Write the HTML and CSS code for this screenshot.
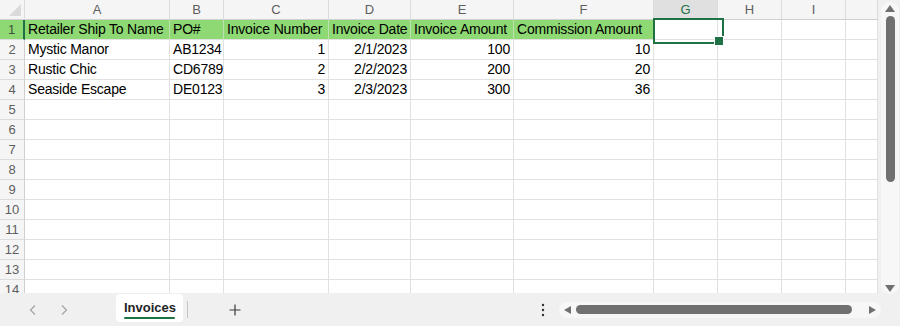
FILE: index.html
```html
<!DOCTYPE html>
<html lang="en">
<head>
    <meta charset="UTF-8">
    <meta name="viewport" content="width=device-width, initial-scale=1.0">
    <title>Invoices - Workbook</title>
    <link rel="stylesheet" href="styles.css">
</head>
<body>
    <div class="workbook">
        <div class="sheet">
            <div class="grid">
                <!-- column headers -->
                <div class="ch corner"></div>
                <div class="ch">A</div>
                <div class="ch">B</div>
                <div class="ch">C</div>
                <div class="ch">D</div>
                <div class="ch">E</div>
                <div class="ch">F</div>
                <div class="ch on">G</div>
                <div class="ch">H</div>
                <div class="ch">I</div>
                <div class="ch"></div>

                <!-- row 1: headings -->
                <div class="rh on">1</div>
                <div class="cell fill">Retailer Ship To Name</div>
                <div class="cell fill">PO#</div>
                <div class="cell fill">Invoice Number</div>
                <div class="cell fill">Invoice Date</div>
                <div class="cell fill">Invoice Amount</div>
                <div class="cell fill">Commission Amount</div>
                <div class="cell sel"></div>
                <div class="cell"></div>
                <div class="cell"></div>
                <div class="cell"></div>

                <div class="rh">2</div>
                <div class="cell">Mystic Manor</div>
                <div class="cell">AB1234</div>
                <div class="cell num">1</div>
                <div class="cell num">2/1/2023</div>
                <div class="cell num">100</div>
                <div class="cell num">10</div>
                <div class="cell"></div><div class="cell"></div><div class="cell"></div><div class="cell"></div>

                <div class="rh">3</div>
                <div class="cell">Rustic Chic</div>
                <div class="cell">CD6789</div>
                <div class="cell num">2</div>
                <div class="cell num">2/2/2023</div>
                <div class="cell num">200</div>
                <div class="cell num">20</div>
                <div class="cell"></div><div class="cell"></div><div class="cell"></div><div class="cell"></div>

                <div class="rh">4</div>
                <div class="cell">Seaside Escape</div>
                <div class="cell">DE0123</div>
                <div class="cell num">3</div>
                <div class="cell num">2/3/2023</div>
                <div class="cell num">300</div>
                <div class="cell num">36</div>
                <div class="cell"></div><div class="cell"></div><div class="cell"></div><div class="cell"></div>

                <!-- empty rows -->
                <div class="rh">5</div>
                <div class="cell"></div><div class="cell"></div><div class="cell"></div><div class="cell"></div><div class="cell"></div>
                <div class="cell"></div><div class="cell"></div><div class="cell"></div><div class="cell"></div><div class="cell"></div>
                <div class="rh">6</div>
                <div class="cell"></div><div class="cell"></div><div class="cell"></div><div class="cell"></div><div class="cell"></div>
                <div class="cell"></div><div class="cell"></div><div class="cell"></div><div class="cell"></div><div class="cell"></div>
                <div class="rh">7</div>
                <div class="cell"></div><div class="cell"></div><div class="cell"></div><div class="cell"></div><div class="cell"></div>
                <div class="cell"></div><div class="cell"></div><div class="cell"></div><div class="cell"></div><div class="cell"></div>
                <div class="rh">8</div>
                <div class="cell"></div><div class="cell"></div><div class="cell"></div><div class="cell"></div><div class="cell"></div>
                <div class="cell"></div><div class="cell"></div><div class="cell"></div><div class="cell"></div><div class="cell"></div>
                <div class="rh">9</div>
                <div class="cell"></div><div class="cell"></div><div class="cell"></div><div class="cell"></div><div class="cell"></div>
                <div class="cell"></div><div class="cell"></div><div class="cell"></div><div class="cell"></div><div class="cell"></div>
                <div class="rh">10</div>
                <div class="cell"></div><div class="cell"></div><div class="cell"></div><div class="cell"></div><div class="cell"></div>
                <div class="cell"></div><div class="cell"></div><div class="cell"></div><div class="cell"></div><div class="cell"></div>
                <div class="rh">11</div>
                <div class="cell"></div><div class="cell"></div><div class="cell"></div><div class="cell"></div><div class="cell"></div>
                <div class="cell"></div><div class="cell"></div><div class="cell"></div><div class="cell"></div><div class="cell"></div>
                <div class="rh">12</div>
                <div class="cell"></div><div class="cell"></div><div class="cell"></div><div class="cell"></div><div class="cell"></div>
                <div class="cell"></div><div class="cell"></div><div class="cell"></div><div class="cell"></div><div class="cell"></div>
                <div class="rh">13</div>
                <div class="cell"></div><div class="cell"></div><div class="cell"></div><div class="cell"></div><div class="cell"></div>
                <div class="cell"></div><div class="cell"></div><div class="cell"></div><div class="cell"></div><div class="cell"></div>
                <div class="rh">14</div>
                <div class="cell"></div><div class="cell"></div><div class="cell"></div><div class="cell"></div><div class="cell"></div>
                <div class="cell"></div><div class="cell"></div><div class="cell"></div><div class="cell"></div><div class="cell"></div>
            </div>

            <div class="vscroll">
                <div class="vtrack">
                    <svg class="arrow-up" width="10" height="7" viewBox="0 0 10 7"><path d="M5 0 L10 7 L0 7 Z" fill="#707070"/></svg>
                    <div class="vthumb"></div>
                    <svg class="arrow-down" width="10" height="7" viewBox="0 0 10 7"><path d="M0 0 L10 0 L5 7 Z" fill="#707070"/></svg>
                </div>
            </div>
        </div>

        <div class="tabbar">
            <div class="nav">
                <span class="nav-btn">
                    <svg width="7" height="10" viewBox="0 0 7 10"><path d="M6 0.5 L1.5 5 L6 9.5" fill="none" stroke="#a3a3a3" stroke-width="1.2"/></svg>
                </span>
                <span class="nav-btn">
                    <svg width="7" height="10" viewBox="0 0 7 10"><path d="M1 0.5 L5.5 5 L1 9.5" fill="none" stroke="#a3a3a3" stroke-width="1.2"/></svg>
                </span>
            </div>

            <div class="tab active">
                <span class="tab-name">Invoices</span>
                <span class="tab-line"></span>
            </div>
            <span class="tab-sep"></span>

            <span class="add-btn">
                <svg width="12" height="12" viewBox="0 0 12 12"><path d="M6 0.5 V11.5 M0.5 6 H11.5" stroke="#3b3b3b" stroke-width="1.2"/></svg>
            </span>

            <span class="more">
                <svg width="4" height="14" viewBox="0 0 4 14"><circle cx="2" cy="2" r="1.2" fill="#333"/><circle cx="2" cy="7" r="1.2" fill="#333"/><circle cx="2" cy="12" r="1.2" fill="#333"/></svg>
            </span>

            <div class="hscroll">
                <svg width="7" height="8" viewBox="0 0 7 8"><path d="M7 0 L7 8 L0 4 Z" fill="#707070"/></svg>
                <div class="hthumb"></div>
                <svg class="arrow-right" width="7" height="8" viewBox="0 0 7 8"><path d="M0 0 L7 4 L0 8 Z" fill="#707070"/></svg>
            </div>
        </div>
    </div>
</body>
</html>
```

FILE: styles.css
```css
* {
    box-sizing: border-box;
}

body {
    margin: 0;
    background: #f0f0f0;
    font-family: "Liberation Sans", Arial, sans-serif;
    overflow: hidden;
}

.workbook {
    width: 900px;
    height: 326px;
    display: flex;
    flex-direction: column;
}

/* ---- sheet ---- */

.sheet {
    display: flex;
    height: 293px;
}

.grid {
    width: 878px;
    height: 293px;
    overflow: hidden;
    display: grid;
    grid-template-columns: 25px 145px 54px 105px 82px 103px 140px 64px 64px 64px 32px;
    grid-template-rows: 20px;
    grid-auto-rows: 20px;
    background: #fff;
}

.cell {
    border-right: 1px solid #e1e1e1;
    border-bottom: 1px solid #e1e1e1;
    padding: 0 3px;
    font-size: 14px;
    line-height: 19px;
    letter-spacing: -0.2px;
    color: #000;
    white-space: nowrap;
    overflow: hidden;
}

.cell.num {
    text-align: right;
}

.cell.fill {
    background: #8ed973;
    border-right-color: #bfe0b0;
}

.cell.sel {
    position: relative;
    overflow: visible;
}

.cell.sel::before {
    content: "";
    position: absolute;
    left: -1px;
    top: -2px;
    width: 67px;
    height: 22px;
    border: 2px solid #1e7145;
    z-index: 2;
}

.cell.sel::after {
    content: "";
    position: absolute;
    left: 60px;
    top: 16px;
    width: 8px;
    height: 8px;
    background: #1e7145;
    border: 1px solid #fff;
    z-index: 3;
}

.ch,
.rh {
    background: #f5f5f5;
    font-size: 13px;
    line-height: 19px;
    color: #5e5e5e;
    text-align: center;
}

.ch {
    border-right: 1px solid #dcdcdc;
    border-bottom: 1px solid #cfcfcf;
}

.ch.on {
    background: #e0e0e0;
    color: #1e7145;
}

.rh {
    border-right: 1px solid #cfcfcf;
    border-bottom: 1px solid #dcdcdc;
}

.rh.on {
    background: #8ed973;
    border-right: 2px solid #1e7145;
    color: #3f4f38;
}

.corner {
    position: relative;
}

.corner::after {
    content: "";
    position: absolute;
    right: 3px;
    bottom: 3px;
    width: 12px;
    height: 12px;
    background: #dadada;
    clip-path: polygon(100% 0, 100% 100%, 0 100%);
}

/* ---- vertical scrollbar ---- */

.vscroll {
    width: 22px;
    padding: 2px 1px 0 3px;
}

.vtrack {
    height: 292px;
    background: #f7f7f7;
    border-radius: 9px;
    display: flex;
    flex-direction: column;
    align-items: center;
    padding: 3px 0 2px;
}

.vthumb {
    width: 9px;
    height: 166px;
    margin-top: 4px;
    background: #707070;
    border-radius: 5px;
}

.arrow-down {
    margin-top: auto;
}

/* ---- sheet tabs ---- */

.tabbar {
    height: 33px;
    display: flex;
    align-items: center;
}

.nav {
    display: flex;
    margin-left: 16px;
}

.nav-btn {
    width: 32px;
    display: flex;
    justify-content: center;
}

.tab {
    align-self: flex-start;
    margin-left: 36px;
    margin-top: 1px;
    width: 67px;
    height: 28px;
    padding: 6px 8px 0;
    background: #fff;
    border-radius: 4px;
    display: flex;
    flex-direction: column;
}

.tab-name {
    font-size: 13px;
    font-weight: bold;
    line-height: 16px;
    color: #242424;
}

.tab-line {
    height: 2px;
    margin-top: 1px;
    background: #1b7340;
    border-radius: 1px;
}

.tab-sep {
    width: 1px;
    height: 17px;
    margin-left: 4px;
    background: #c6c6c6;
}

.add-btn {
    width: 32px;
    margin-left: 31px;
    display: flex;
    justify-content: center;
}

.more {
    margin-left: auto;
    width: 16px;
    display: flex;
    justify-content: center;
}

.hscroll {
    width: 322px;
    height: 16px;
    margin-left: 8px;
    margin-right: 19px;
    padding: 0 5px;
    background: #f7f7f7;
    border-radius: 8px;
    display: flex;
    align-items: center;
}

.hthumb {
    width: 276px;
    height: 9px;
    margin-left: 5px;
    background: #707070;
    border-radius: 5px;
}

.arrow-right {
    margin-left: 17px;
}
```
